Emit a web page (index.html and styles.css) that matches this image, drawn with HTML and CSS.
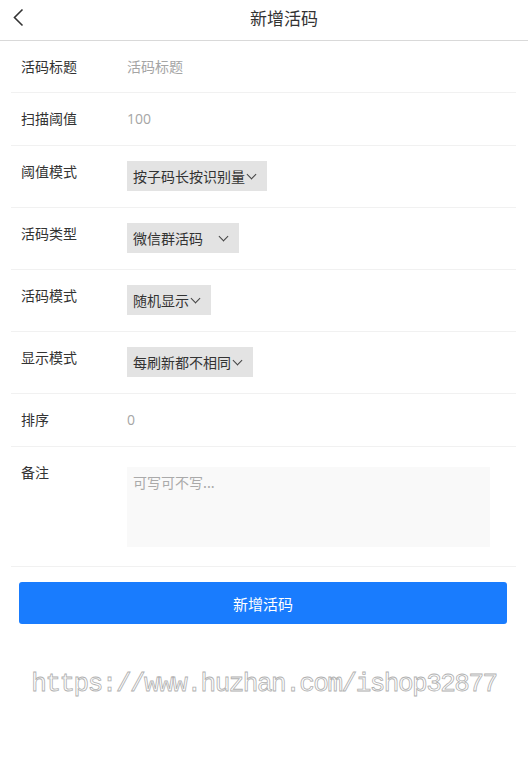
FILE: index.html
```html
<!DOCTYPE html>
<html lang="zh-CN">
<head>
<meta charset="utf-8">
<title>新增活码</title>
<link rel="stylesheet" href="styles.css">
</head>
<body>
<header class="topbar">
  <div class="back">
    <svg width="14" height="20" viewBox="0 0 14 20"><path d="M9.5 1.5 L1.5 9.5 L9.5 17.5" fill="none" stroke="#333" stroke-width="1.6"/></svg>
  </div>
  <h1 class="title">新增活码</h1>
</header>

<main class="form">
  <div class="row"><span class="label">活码标题</span><span class="value placeholder">活码标题</span></div>
  <div class="row"><span class="label">扫描阈值</span><span class="value placeholder num">100</span></div>
  <div class="row"><span class="label">阈值模式</span><span class="select">按子码长按识别量<i class="caret"></i></span></div>
  <div class="row"><span class="label">活码类型</span><span class="select wide">微信群活码<i class="caret"></i></span></div>
  <div class="row"><span class="label">活码模式</span><span class="select">随机显示<i class="caret"></i></span></div>
  <div class="row"><span class="label">显示模式</span><span class="select">每刷新都不相同<i class="caret"></i></span></div>
  <div class="row"><span class="label">排序</span><span class="value placeholder num">0</span></div>
  <div class="row"><span class="label">备注</span><div class="textarea">可写可不写...</div></div>
</main>

<button class="submit">新增活码</button>

<div class="watermark">https://www.huzhan.com/ishop32877</div>
</body>
</html>
```

FILE: styles.css
```css
* { box-sizing: border-box; }
html, body { margin: 0; padding: 0; background: #fff; }
body {
  font-family: "Noto Sans CJK SC", "Noto Sans", sans-serif;
  color: #333;
  width: 528px;
}
.topbar {
  height: 41px;
  border-bottom: 1px solid #d9d9d9;
  display: flex;
  align-items: flex-start;
}
.back {
  width: 40px;
  padding-left: 13px;
  padding-top: 8px;
  display: flex;
}
.title {
  flex: 1;
  margin: 0;
  text-align: center;
  font-size: 17px;
  font-weight: normal;
  color: #333;
  line-height: 35px;
}
.form {
  margin: 0 12px 0 11px;
}
.row {
  display: flex;
  align-items: flex-start;
  padding: 15px 0 16px;
  border-bottom: 1px solid #f1f1f1;
  font-size: 14px;
  line-height: 21px;
}
.row:first-child { padding-bottom: 15px; }
.label {
  width: 116px;
  padding-left: 10px;
  flex: none;
  color: #333;
  line-height: 21px;
}
.value { line-height: 21px; }
.placeholder { color: #a5a5a5; }
.num { font-family: "Open Sans", "Noto Sans", sans-serif; font-size: 14px; }
.select {
  display: inline-flex;
  align-items: center;
  height: 30px;
  padding: 0 10px 0 6px;
  background: #e3e3e3;
  color: #333;
  font-size: 14px;
}
.select.wide { width: 112px; justify-content: space-between; }
.caret {
  display: inline-block;
  width: 12px;
  height: 12px;
  position: relative;
}
.caret::before {
  content: "";
  position: absolute;
  left: 3px;
  top: 1px;
  width: 6px;
  height: 6px;
  border-right: 1px solid #444;
  border-bottom: 1px solid #444;
  transform: rotate(45deg);
}
.textarea {
  flex: 1;
  margin: 5px 26px 3px 0;
  height: 80px;
  background: #f9f9f9;
  color: #aaa;
  padding: 5px 6px;
  font-size: 14px;
  line-height: 21px;
}
.submit {
  display: block;
  margin: 15px 21px 0 19px;
  width: 488px;
  height: 42px;
  border: none;
  border-radius: 3px;
  background: #197cfe;
  color: #fff;
  font-family: "Noto Sans CJK SC", "Noto Sans", sans-serif;
  font-size: 15px;
}
.watermark {
  margin-top: 45px;
  text-align: center;
  font-family: "Liberation Mono", monospace;
  font-size: 26px;
  letter-spacing: -1.5px;
  color: #fff;
  -webkit-text-stroke: 0.8px #b0b0b0;
  line-height: 30px;
}
```
